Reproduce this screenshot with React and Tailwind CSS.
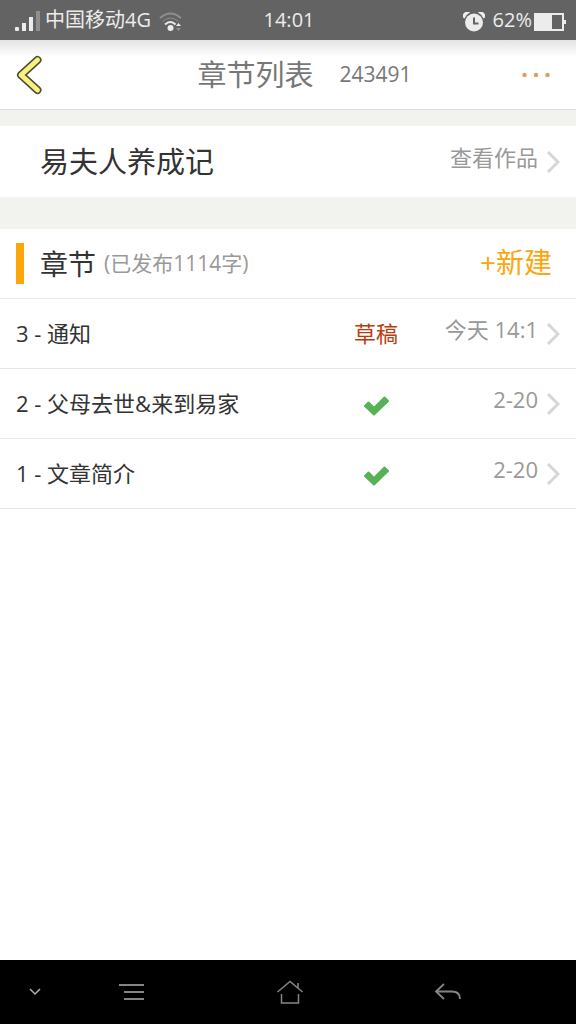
const chapters = [
  { id: 3, title: "通知", published: false, date: "今天 14:1" },
  { id: 2, title: "父母去世&来到易家", published: true, date: "2-20" },
  { id: 1, title: "文章简介", published: true, date: "2-20" },
];

function StatusBar() {
  return (
    <div className="h-10 pl-3 pr-[10px] bg-[#636363] text-[#ececec] text-[20px] leading-10 grid grid-cols-[1fr_auto_1fr] items-center">
      <div className="flex items-center gap-1">
        <svg className="w-[29px] h-6" viewBox="0 0 29 24" fill="#ececec">
          <rect x="3" y="17" width="4" height="4" rx="1" />
          <rect x="10" y="13" width="4" height="8" />
          <rect x="17" y="7" width="4" height="14" />
          <rect x="24" y="1" width="4" height="20" fill="#8f8f8f" />
        </svg>
        <span className="pb-1">中国移动4G</span>
        <svg className="w-6 h-5 ml-1" viewBox="0 0 24 20" fill="none">
          <path d="M1 6Q11.500 -3 22 6" stroke="#8f8f8f" strokeWidth="2" />
          <path d="M3.500 9.500Q11.500 2.500 19.500 9.500" stroke="#8f8f8f" strokeWidth="1" />
          <path d="M6 12.500Q11.500 7.500 16.500 12.500" stroke="#ececec" strokeWidth="2" />
          <circle cx="11.500" cy="16" r="3" fill="#ececec" />
          <path d="M17 14l2.500-3 2.500 3z" fill="#ececec" />
          <path d="M17 16l2.500 3 2.500-3z" fill="#8f8f8f" />
        </svg>
      </div>
      <span className="pb-1">14:01</span>
      <div className="flex items-center justify-end">
        <svg className="w-[22px] h-5 mr-2" viewBox="0 0 22 20">
          <circle cx="11" cy="10.500" r="9" fill="#ececec" />
          <path d="M0 5.500A4.500 4.500 0 0 1 7 0.500Q3 2.500 1.500 6.500z" fill="#ececec" />
          <path d="M22 5.500A4.500 4.500 0 0 0 15 0.500Q19 2.500 20.500 6.500z" fill="#ececec" />
          <path d="M11 5.500V11.500H15.500" fill="none" stroke="#636363" strokeWidth="2" />
        </svg>
        <span className="pb-1">62%</span>
        <svg className="w-8 h-[18px] ml-[2px]" viewBox="0 0 32 18">
          <rect x="1" y="1" width="28" height="16" fill="none" stroke="#ececec" strokeWidth="2" />
          <rect x="2" y="2" width="16" height="14" fill="#ececec" />
          <rect x="30" y="7" width="2" height="4" fill="#ececec" />
        </svg>
      </div>
    </div>
  );
}

function Chevron() {
  return (
    <svg className="w-[14px] h-6 shrink-0" viewBox="0 0 14 24" fill="none" stroke="#d6d6d6" strokeWidth="3">
      <path d="M2 2L12 12L2 22" />
    </svg>
  );
}

function Check() {
  return (
    <svg className="w-[26px] h-5 mt-1" viewBox="0 0 26 20" role="img" aria-label="已发布">
      <path
        d="M2 10L5.500 6.500L11 12L21.500 1.500L25 5L11 18.500Z"
        fill="#57b257"
        stroke="#57b257"
        strokeWidth="2"
        strokeLinejoin="round"
      />
    </svg>
  );
}

function ChapterRow({ chapter }) {
  return (
    <li className="border-b border-[#e6e6e6]">
      <a href="#" className="h-[69px] px-4 flex items-center text-[22px]">
        <span className="flex-1 text-[#333]">
          {chapter.id} - {chapter.title}
        </span>
        <span className="w-24 flex justify-center text-[#b83c12]">
          {chapter.published ? <Check /> : "草稿"}
        </span>
        <span className="w-[114px] pb-2 mr-2 text-right text-[#999]">
          {chapter.date}
        </span>
        <Chevron />
      </a>
    </li>
  );
}

function NavBar() {
  return (
    <nav className="h-16 bg-black flex items-center text-[#858585]">
      <button className="w-[70px] flex justify-center" aria-label="收起">
        <svg className="w-3 h-3" viewBox="0 0 12 12" fill="none" stroke="#b0b0b0" strokeWidth="1.500">
          <path d="M1 3L6 8L11 3" />
        </svg>
      </button>
      <div className="flex-1 flex items-center justify-between pl-12 pr-[114px]">
        <button aria-label="菜单">
          <svg className="w-7 h-6" viewBox="0 0 28 24" fill="none" stroke="currentColor" strokeWidth="2">
            <path d="M1 5H26M6 12H26M6 19H26" />
          </svg>
        </button>
        <button aria-label="主页">
          <svg className="w-7 h-6" viewBox="0 0 28 24" fill="none" stroke="currentColor" strokeWidth="1.500">
            <path d="M1.500 12L14 1.500L26.500 12M22 8V3M5.500 14V23H22.500V14" />
          </svg>
        </button>
        <button aria-label="返回">
          <svg className="w-7 h-6" viewBox="0 0 28 24" fill="none" stroke="currentColor" strokeWidth="1.800">
            <path d="M10 4L2 11.500L10 19M2 11.500H18Q26 11.500 26 19" />
          </svg>
        </button>
      </div>
    </nav>
  );
}

export default function App() {
  return (
    <div className="min-h-screen flex flex-col bg-white font-['Open_Sans','Noto_Sans_CJK_SC',sans-serif]">
      <StatusBar />

      {/* Header */}
      <header className="h-[70px] px-4 border-b border-[#dcdcd8] bg-linear-to-b from-[#e4e4e4] to-white to-25% flex items-center justify-between">
        <button className="w-[27px]" aria-label="返回">
          <svg className="w-[27px] h-10" viewBox="0 0 27 40" fill="none" strokeLinecap="round" strokeLinejoin="round">
            <path d="M21.500 5L5 20L21.500 35" stroke="#4c4b35" strokeWidth="8" />
            <path d="M21.500 5L5 20L21.500 35" stroke="#f8f080" strokeWidth="5" />
          </svg>
        </button>
        <div className="flex items-center gap-[26px] pl-11 text-[#777]">
          <h1 className="text-[29px] leading-10">章节列表</h1>
          <span className="text-[21px]">243491</span>
        </div>
        <button className="w-[38px]" aria-label="更多">
          <svg className="w-7 h-4" viewBox="0 0 28 16" fill="#e09a62">
            <circle cx="2.500" cy="8" r="2.200" />
            <circle cx="14" cy="8" r="2.200" />
            <circle cx="25.500" cy="8" r="2.200" />
          </svg>
        </button>
      </header>

      <main className="flex-1">
        {/* Book */}
        <div className="bg-[#f2f3ee] pt-4 pb-8">
          <a href="#" className="h-[71px] pl-10 pr-4 bg-white flex items-center">
            <h2 className="flex-1 text-[29px] text-[#333]">易夫人养成记</h2>
            <span className="pb-2 mr-2 text-[22px] text-[#999]">查看作品</span>
            <Chevron />
          </a>
        </div>

        {/* Chapters */}
        <section>
          <div className="h-[70px] pl-4 pr-6 border-b border-[#e6e6e6] flex items-center">
            <div className="w-2 h-[41px] bg-[#fba60a]" />
            <h2 className="ml-4 text-[28px] text-[#333]">章节</h2>
            <span className="ml-2 flex-1 text-[21px] text-[#999]">(已发布1114字)</span>
            <button className="pb-1 text-[28px] text-[#fba60a]">+新建</button>
          </div>
          <ul>
            {chapters.map((chapter) => (
              <ChapterRow key={chapter.id} chapter={chapter} />
            ))}
          </ul>
        </section>
      </main>

      <NavBar />
    </div>
  );
}
